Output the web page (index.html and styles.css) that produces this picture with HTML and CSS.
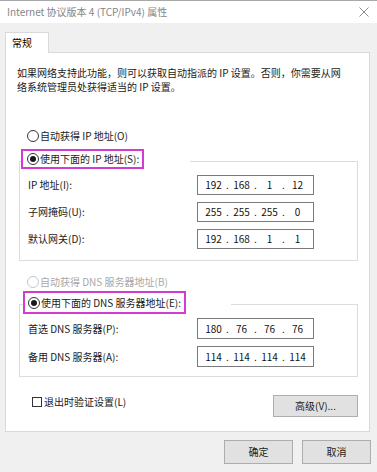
FILE: index.html
```
<!DOCTYPE html>
<html lang="zh-CN">
<head>
<meta charset="utf-8">
<title>Internet 协议版本 4 (TCP/IPv4) 属性</title>
<link rel="stylesheet" href="styles.css">
</head>
<body>
<div class="titlebar">
  <span class="title">Internet 协议版本 4 (TCP/IPv4) 属性</span>
  <svg class="close" width="10" height="10" viewBox="0 0 10 10"><path d="M0.5 0.5 L9.5 9.5 M9.5 0.5 L0.5 9.5" stroke="#8a8a8a" stroke-width="1" fill="none"/></svg>
</div>
<div class="dialog">
  <div class="tabs"><div class="tab">常规</div></div>
  <div class="panel">
    <p class="intro">如果网络支持此功能，则可以获取自动指派的 IP 设置。否则，你需要从网<br>络系统管理员处获得适当的 IP 设置。</p>

    <div class="opt opt-ip"><span class="radio"></span>自动获得 IP 地址(O)</div>
    <fieldset class="group group-ip">
      <legend class="lg lg-ip"><span class="hl hl-ip"><span class="radio on"></span>使用下面的 IP 地址(S):</span></legend>
      <div class="rows rows-ip">
        <div class="row"><span class="lbl">IP 地址(I):</span><div class="ip"><span>192</span><i>.</i><span>168</span><i>.</i><span>1</span><i>.</i><span>12</span></div></div>
        <div class="row"><span class="lbl">子网掩码(U):</span><div class="ip"><span>255</span><i>.</i><span>255</span><i>.</i><span>255</span><i>.</i><span>0</span></div></div>
        <div class="row"><span class="lbl">默认网关(D):</span><div class="ip"><span>192</span><i>.</i><span>168</span><i>.</i><span>1</span><i>.</i><span>1</span></div></div>
      </div>
    </fieldset>

    <div class="opt opt-dns disabled"><span class="radio"></span>自动获得 DNS 服务器地址(B)</div>
    <fieldset class="group group-dns">
      <legend class="lg lg-dns"><span class="hl hl-dns"><span class="radio on"></span>使用下面的 DNS 服务器地址(E):</span></legend>
      <div class="rows rows-dns">
        <div class="row"><span class="lbl">首选 DNS 服务器(P):</span><div class="ip"><span>180</span><i>.</i><span>76</span><i>.</i><span>76</span><i>.</i><span>76</span></div></div>
        <div class="row"><span class="lbl">备用 DNS 服务器(A):</span><div class="ip"><span>114</span><i>.</i><span>114</span><i>.</i><span>114</span><i>.</i><span>114</span></div></div>
      </div>
    </fieldset>

    <div class="bottom">
      <label class="check"><span class="box"></span>退出时验证设置(L)</label>
      <button class="btn adv">高级(V)...</button>
    </div>
  </div>
  <div class="footer">
    <button class="btn foot">确定</button>
    <button class="btn foot">取消</button>
  </div>
</div>
</body>
</html>
```
FILE: styles.css
```
* { box-sizing: border-box; }
html, body { margin: 0; padding: 0; }
body {
  width: 377px;
  height: 472px;
  overflow: hidden;
  background: #f0f0f0;
  font-family: "Noto Sans CJK SC", "Noto Sans", sans-serif;
  font-size: 10px;
  line-height: 14px;
  color: #1a1a1a;
}
.titlebar {
  height: 23px;
  background: #fff;
  border-top: 1px solid #a8a8a8;
  display: flex;
  align-items: center;
  justify-content: space-between;
  padding: 0 7px 0 7px;
}
.title { color: #858585; font-size: 10px; }
.close { display: block; margin-right: 1px; }

.dialog { padding: 9px 6px 0 5px; }
.tabs { display: flex; }
.tab {
  position: relative;
  z-index: 1;
  width: 44px;
  height: 21px;
  background: #fff;
  border: 1px solid #d9d9d9;
  border-bottom: none;
  margin-bottom: -1px;
  padding: 3px 0 0 6px;
  color: #000;
}
.panel {
  background: #fff;
  border: 1px solid #d9d9d9;
  margin-right: 1px;
  padding: 13px 11px 14px 11px;
}
.intro { margin: 0; color: #1a1a1a; }

.opt {
  display: flex;
  align-items: center;
  height: 20px;
  padding-left: 10px;
}
.opt-ip { margin-top: 32px; }
.opt-dns { margin-top: 11px; height: 19px; }
.disabled { color: #a8a8a8; }

.radio {
  width: 12px;
  height: 12px;
  border: 1px solid #333;
  border-radius: 50%;
  margin-right: 1px;
  display: inline-flex;
  align-items: center;
  justify-content: center;
  flex: none;
  background: #fff;
}
.disabled .radio { border-color: #c8c8c8; }
.radio.on::after {
  content: "";
  width: 6px;
  height: 6px;
  border-radius: 50%;
  background: #1a1a1a;
}

.group {
  margin: 0 0 0 2px;
  padding: 0;
  border: 1px solid #dcdcdc;
  min-width: 0;
}
.group-ip { margin-top: 3px; }
.lg { padding: 0; display: block; }
.lg-ip { margin-left: 1px; width: 169px; height: 24px; }
.lg-dns { margin-left: 3px; width: 208px; height: 26px; }
.hl {
  display: inline-flex;
  align-items: center;
  border: 2px solid #d23cd2;
  padding: 0 3px 0 4px;
}
.hl-ip { height: 20px; }
.hl-dns { height: 23px; padding-left: 3px; }

.rows {
  display: flex;
  flex-direction: column;
  gap: 7px;
  padding: 0 8px;
}
.rows-ip { margin-top: 2px; padding-bottom: 11px; }
.rows-dns { margin-top: 1px; padding-bottom: 9px; }
.row { display: flex; align-items: center; }
.rows-ip .row { height: 20px; }
.rows-dns .row { height: 21px; }
.lbl { width: 169px; flex: none; }
.ip {
  width: 117px;
  height: 100%;
  border: 1px solid #7a7a7a;
  display: flex;
  align-items: center;
  padding-left: 4px;
  color: #111;
}
.ip span { width: 23px; text-align: center; }
.ip i { font-style: normal; width: 5px; text-align: center; }

.bottom {
  display: flex;
  justify-content: space-between;
  align-items: flex-start;
  margin-top: 18px;
  padding-right: 0;
}
.check {
  display: flex;
  align-items: center;
  margin-left: 15px;
  height: 14px;
}
.box {
  width: 10px;
  height: 10px;
  border: 1px solid #333;
  margin-right: 2px;
  background: #fff;
}
.btn {
  font: inherit;
  color: #1a1a1a;
  background: #e1e1e1;
  border: 1px solid #adadad;
  padding: 0;
  margin: 0;
}
.adv { width: 85px; height: 22px; }

.footer {
  display: flex;
  justify-content: flex-end;
  gap: 9px;
  margin-top: 8px;
}
.foot { width: 69px; height: 24px; }
```
